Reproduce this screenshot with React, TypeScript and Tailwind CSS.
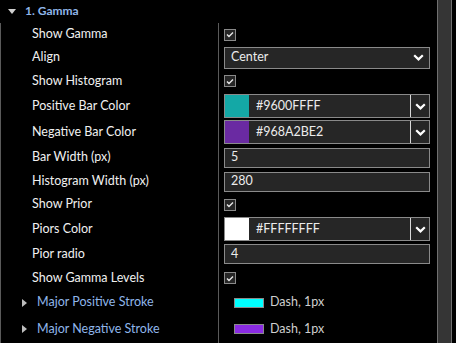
import { ReactNode } from 'react';

const font = { fontFamily: 'Lato, "Noto Sans", sans-serif' };

const Chevron = () => (
  <svg width="11" height="7" viewBox="0 0 11 7" className="text-white">
    <path d="M1.2 1.2 L5.5 5.4 L9.8 1.2" fill="none" stroke="currentColor" strokeWidth="2.2" />
  </svg>
);

const Checkbox = () => (
  <div className="flex h-[12px] w-[12px] items-center justify-center border border-[#8a8a8a] bg-[#262626]">
    <svg width="8" height="7" viewBox="0 0 8 7">
      <path d="M1 3.5 L3 5.5 L7 1.5" fill="none" stroke="#e8e8e8" strokeWidth="1.4" />
    </svg>
  </div>
);

const Select = ({ value }: { value: string }) => (
  <div className="flex h-[22px] w-[206px] items-center justify-between border border-[#8a8a8a] bg-[#262626] pl-[6px] pr-[5px] text-[12.5px] text-[#ececec]">
    <span>{value}</span>
    <Chevron />
  </div>
);

const TextInput = ({ value }: { value: string }) => (
  <div className="flex h-[20px] w-[206px] items-center border border-[#8a8a8a] bg-[#262626] pl-[6px] text-[12.5px] text-[#ececec]">
    {value}
  </div>
);

const ColorInput = ({ swatch, value }: { swatch: string; value: string }) => (
  <div className="flex h-[24px] w-[206px] border border-[#8a8a8a] bg-[#262626] text-[12.5px] text-[#ececec]">
    <div className="w-[24px]" style={{ backgroundColor: swatch }} />
    <div className="flex flex-1 items-center pl-[7px]">{value}</div>
    <div className="flex w-[19px] items-center justify-center border-l border-[#d8d8d8]">
      <Chevron />
    </div>
  </div>
);

const Stroke = ({ color }: { color: string }) => (
  <div className="flex items-center gap-[6px] pl-[10px] text-[12.5px] text-[#cfcfcf]">
    <div className="h-[10px] w-[30px] border border-[#8a8a8a]" style={{ backgroundColor: color }} />
    <span>Dash, 1px</span>
  </div>
);

const Caret = () => (
  <svg width="5" height="8" viewBox="0 0 5 8">
    <path d="M0 0 L5 4 L0 8 Z" fill="#bdbdbd" />
  </svg>
);

type Row = { label: string; h: string; control: ReactNode; sub?: boolean };

const rows: Row[] = [
  { label: 'Show Gamma', h: 'h-[23px]', control: <Checkbox /> },
  { label: 'Align', h: 'h-[23px]', control: <Select value="Center" /> },
  { label: 'Show Histogram', h: 'h-[24px]', control: <Checkbox /> },
  { label: 'Positive Bar Color', h: 'h-[26px]', control: <ColorInput swatch="#14a8a6" value="#9600FFFF" /> },
  { label: 'Negative Bar Color', h: 'h-[26px]', control: <ColorInput swatch="#6a2aa2" value="#968A2BE2" /> },
  { label: 'Bar Width (px)', h: 'h-[25px]', control: <TextInput value="5" /> },
  { label: 'Histogram Width (px)', h: 'h-[23px]', control: <TextInput value="280" /> },
  { label: 'Show Prior', h: 'h-[23px]', control: <Checkbox /> },
  { label: 'Piors Color', h: 'h-[26px]', control: <ColorInput swatch="#ffffff" value="#FFFFFFFF" /> },
  { label: 'Pior radio', h: 'h-[24px]', control: <TextInput value="4" /> },
  { label: 'Show Gamma Levels', h: 'h-[24px]', control: <Checkbox /> },
  { label: 'Major Positive Stroke', h: 'h-[25px]', control: <Stroke color="#00ffff" />, sub: true },
  { label: 'Major Negative Stroke', h: 'h-[28px]', control: <Stroke color="#8a2be2" />, sub: true },
];

export default function App() {
  return (
    <div className="flex h-[343px] w-[456px] overflow-hidden bg-black" style={font}>
      <div className="flex w-[437px] flex-col">
        <div className="flex h-[23px] shrink-0 items-center pl-[8px] pb-[1px]">
          <svg width="8" height="5" viewBox="0 0 8 5">
            <path d="M0 0 L8 0 L4 5 Z" fill="#d0d0d0" />
          </svg>
          <span className="ml-[9px] text-[12px] font-bold text-[#8fb6ea]">1. Gamma</span>
        </div>
        <div className="flex flex-1 flex-col border-l border-[#5a5a5a]">
          {rows.map((r) => (
            <div key={r.label} className={`flex shrink-0 ${r.h}`}>
              <div className="flex w-[218px] items-center border-r border-[#5a5a5a] text-[12.5px]">
                {r.sub ? (
                  <div className="flex items-center pl-[21px]">
                    <Caret />
                    <span className="ml-[10px] text-[#8fb6ea]">{r.label}</span>
                  </div>
                ) : (
                  <span className="pl-[31px] text-[#f0f0f0]">{r.label}</span>
                )}
              </div>
              <div className="flex flex-1 items-center pl-[5px]">{r.control}</div>
            </div>
          ))}
        </div>
      </div>
      <div className="h-full w-[15px] border-x border-[#707070] bg-[#353535]" />
    </div>
  );
}
